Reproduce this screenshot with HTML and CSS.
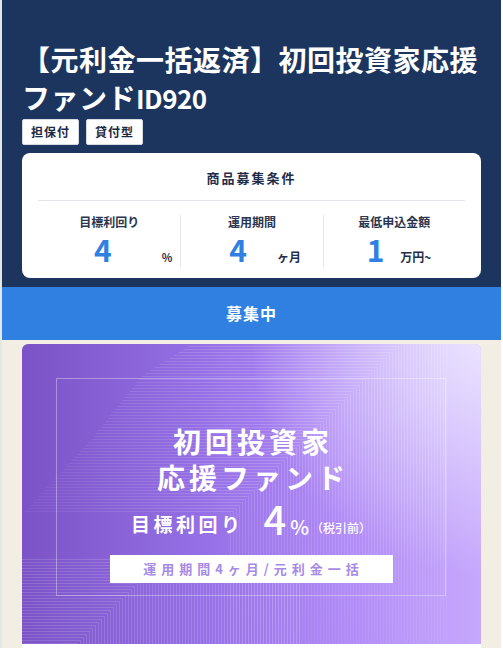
FILE: index.html
```html
<!DOCTYPE html>
<html lang="ja">
<head>
    <meta charset="UTF-8">
    <meta name="viewport" content="width=device-width, initial-scale=1.0">
    <title>初回投資家応援ファンドID920</title>
    <link rel="stylesheet" href="styles.css">
</head>
<body>
<div class="page">
    <header class="fund-header">
        <h1 class="fund-title">【元利金一括返済】初回投資家応援ファンド<span class="fund-id">ID920</span></h1>
        <div class="tags">
            <span class="tag">担保付</span>
            <span class="tag">貸付型</span>
        </div>

        <div class="cond-card">
            <h2 class="cond-title">商品募集条件</h2>
            <div class="cond-grid">
                <div class="cond-col cond-col--rate">
                    <p class="cond-label">目標利回り</p>
                    <p class="cond-value"><span class="cond-num">4</span><span class="cond-unit">%</span></p>
                </div>
                <div class="cond-col cond-col--term">
                    <p class="cond-label">運用期間</p>
                    <p class="cond-value"><span class="cond-num">4</span><span class="cond-unit">ヶ月</span></p>
                </div>
                <div class="cond-col cond-col--min">
                    <p class="cond-label">最低申込金額</p>
                    <p class="cond-value"><span class="cond-num">1</span><span class="cond-unit">万円~</span></p>
                </div>
            </div>
        </div>
    </header>

    <div class="status-bar">募集中</div>

    <main class="fund-body">
        <div class="fund-card">
            <div class="hero">
                <!-- decorative line pattern -->
                <div class="stripes stripes--tr-h"></div>
                <div class="stripes stripes--tr-v"></div>
                <div class="stripes stripes--bl-h"></div>
                <div class="stripes stripes--bl-v"></div>

                <div class="hero-frame">
                    <p class="hero-title">初回投資家</p>
                    <p class="hero-title">応援ファンド</p>
                    <p class="hero-yield">
                        <span class="hero-label">目標利回り</span>
                        <span class="hero-num">4</span>
                        <span class="hero-pct">%</span>
                        <span class="hero-note">（税引前）</span>
                    </p>
                    <p class="hero-term">運用期間4ヶ月/元利金一括</p>
                </div>
            </div>
            <div class="fund-card-body"></div>
        </div>
    </main>
</div>
</body>
</html>
```

FILE: styles.css
```css
body {
    margin: 0;
    font-family: "Noto Sans CJK JP", "Noto Sans", sans-serif;
    background-color: #fff;
}

.page {
    border-left: 2px solid #e6e6e6;
    margin-right: 2px;
}

/* Header */
.fund-header {
    background-color: #1c355e; /* navy */
    padding: 40px 20px 9px;
}

.fund-title {
    margin: 0;
    color: #fff;
    font-size: 28px;
    line-height: 38px;
    font-weight: 700;
    letter-spacing: 0.5px;
}

.fund-id {
    font-size: 26px;
    letter-spacing: -0.5px;
}

.tags {
    display: flex;
    gap: 7px;
    margin-top: 2px;
}

.tag {
    background: #fff;
    border: 1px solid #d5d9e0;
    border-radius: 2px;
    padding: 0 8px;
    font-size: 12px;
    line-height: 24px;
    font-weight: 700;
    letter-spacing: 1px;
    color: #1d2a44;
}

/* Conditions card */
.cond-card {
    margin-top: 8px;
    background: #fff;
    border-radius: 8px;
    padding: 0 16px 11px;
}

.cond-title {
    margin: 0;
    padding-top: 2px;
    text-align: center;
    font-size: 13px;
    line-height: 45px;
    font-weight: 700;
    letter-spacing: 2px;
    color: #1f2d4a;
    border-bottom: 1px solid #e2e5ea;
}

.cond-grid {
    display: grid;
    grid-template-columns: repeat(3, 1fr);
    padding-top: 14px;
}

.cond-col + .cond-col {
    border-left: 1px solid #e2e5ea;
}

.cond-label {
    margin: 0;
    text-align: center;
    font-size: 12px;
    line-height: 14px;
    font-weight: 700;
    color: #2a3550;
}

.cond-value {
    margin: 2px 0 0;
    display: flex;
    align-items: baseline;
    height: 36px;
}

.cond-num {
    font-size: 30px;
    line-height: 36px;
    font-weight: 700;
    color: #2f80e0;
}

.cond-unit {
    font-size: 12px;
    line-height: 14px;
    font-weight: 700;
    color: #1f2d4a;
}

.cond-col--rate .cond-value { padding-left: 56px; }
.cond-col--rate .cond-unit { margin-left: 50px; font-size: 11px; }
.cond-col--term .cond-value { padding-left: 48px; }
.cond-col--term .cond-unit { margin-left: 30px; }
.cond-col--min .cond-value { padding-left: 43px; }
.cond-col--min .cond-unit { margin-left: 16px; }

/* Status */
.status-bar {
    background-color: #2f80e0;
    color: #fff;
    text-align: center;
    font-size: 16px;
    font-weight: 700;
    letter-spacing: 1px;
    line-height: 53px;
}

/* Body */
.fund-body {
    background-color: #f2eee3;
    padding: 4px 20px 0;
}

.fund-card {
    background: #fff;
    border-radius: 6px 6px 0 0;
    overflow: hidden;
}

.fund-card-body {
    height: 60px;
}

.hero {
    position: relative;
    height: 300px;
    box-sizing: border-box;
    padding: 34px 35px 48px 34px;
    background:
        radial-gradient(circle at 100% 0%, rgba(236, 230, 255, 0.95) 0, rgba(236, 230, 255, 0) 42%),
        linear-gradient(90deg, #7b53c7 0%, #9670e6 40%, #b08af6 70%, #c6a8fc 100%);
}

.stripes {
    position: absolute;
    top: 0;
    left: 0;
    width: 100%;
    height: 100%;
}

.stripes--tr-h {
    background: repeating-linear-gradient(to bottom, transparent 0 2px, rgba(255, 255, 255, 0.16) 2px 3px);
    clip-path: polygon(170px 0, 378px 0, 208px 170px, 0 170px, 68px 97px, 120px 32px);
    -webkit-mask-image: linear-gradient(to right, rgba(0, 0, 0, 0.3), #000 45%);
    mask-image: linear-gradient(to right, rgba(0, 0, 0, 0.3), #000 45%);
}

.stripes--tr-v {
    background: repeating-linear-gradient(to right, transparent 0 1px, rgba(255, 255, 255, 0.16) 1px 2px, transparent 2px 3px);
    clip-path: polygon(378px 0, 425px 0, 425px 300px, 208px 300px, 208px 170px);
    -webkit-mask-image: linear-gradient(to bottom, #000 40%, rgba(0, 0, 0, 0.4));
    mask-image: linear-gradient(to bottom, #000 40%, rgba(0, 0, 0, 0.4));
}

.stripes--bl-h {
    background: repeating-linear-gradient(to bottom, transparent 0 2px, rgba(255, 255, 255, 0.14) 2px 3px);
    clip-path: polygon(0 215px, 140px 215px, 55px 300px, 0 300px);
}

.stripes--bl-v {
    background: repeating-linear-gradient(to right, transparent 0 1px, rgba(255, 255, 255, 0.14) 1px 2px, transparent 2px 3px);
    clip-path: polygon(140px 215px, 280px 215px, 280px 300px, 55px 300px);
}

.hero-frame {
    position: relative;
    height: 100%;
    box-sizing: border-box;
    border: 1px solid rgba(255, 255, 255, 0.35);
    padding-top: 44px;
    display: flex;
    flex-direction: column;
    align-items: center;
    color: #fff;
}

.hero-title {
    margin: 0;
    height: 36px;
    text-align: center;
    font-size: 28px;
    line-height: 36px;
    font-weight: 700;
    letter-spacing: 4px;
    padding-left: 4px;
}

.hero-yield {
    margin: 6px 0 0;
    display: flex;
    align-items: flex-end;
    height: 37px;
}

.hero-label {
    font-size: 19px;
    line-height: 29px;
    font-weight: 700;
    letter-spacing: 3.5px;
}

.hero-num {
    margin-left: 20px;
    font-size: 40px;
    line-height: 40px;
    font-weight: 500;
}

.hero-pct {
    margin-left: 4px;
    font-size: 20px;
    line-height: 22px;
    font-weight: 500;
}

.hero-note {
    margin-left: 2px;
    font-size: 12px;
    line-height: 21px;
    font-weight: 500;
}

.hero-term {
    margin: 17px 0 0;
    width: 283px;
    background: #fff;
    color: #a68ae6;
    text-align: center;
    font-size: 13px;
    line-height: 28px;
    font-weight: 700;
    letter-spacing: 5px;
    padding-left: 5px;
    box-sizing: border-box;
}
```
